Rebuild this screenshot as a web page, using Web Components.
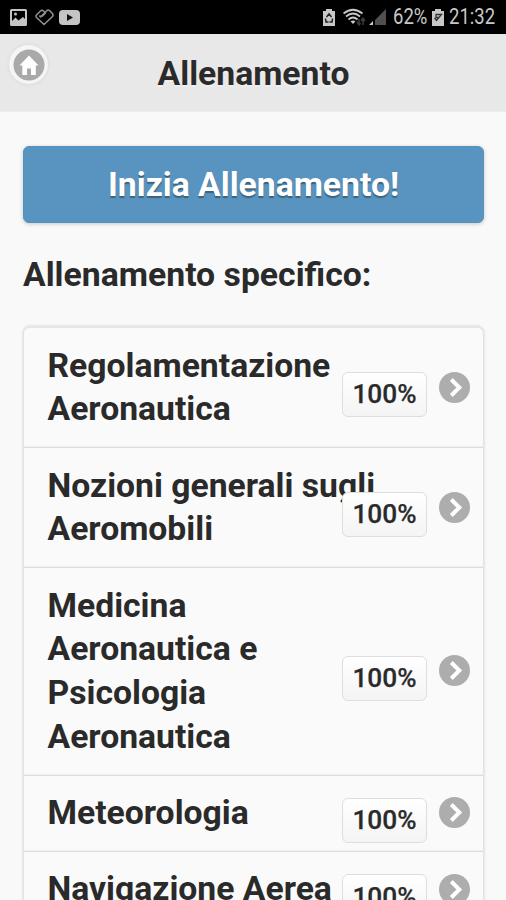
<!DOCTYPE html>
<html lang="it">
<head>
<meta charset="utf-8">
<title>Allenamento</title>
<style>
html, body { margin: 0; height: 900px; overflow: hidden; background: #f9f9f9; }
body { font-family: Roboto, "Liberation Sans", sans-serif; color: #2a2a2a; }
</style>
</head>
<body>
<training-app></training-app>
<script>
const define = (name, html) => customElements.define(name, class extends HTMLElement {
  constructor() {
    super();
    const t = document.createElement('template');
    t.innerHTML = html;
    this.attachShadow({ mode: 'open' }).append(t.content.cloneNode(true));
  }
});

define('status-bar', `
<style>
:host { display: flex; box-sizing: border-box; height: 34px; padding: 0 11px 0 10px; align-items: center; justify-content: space-between; background: #000; color: #c8c8c8; }
.side { display: flex; align-items: center; height: 34px; }
svg { display: block; flex: none; }
span { display: block; font-size: 21.5px; line-height: 34px; white-space: nowrap; }
.pct { width: 34px; margin-left: 6px; }
.pct b, .time b { display: block; font-weight: 400; transform-origin: 0 50%; transform: scaleX(.86); }
.time { width: 46px; margin-left: 5px; }
</style>
<div class="side">
  <svg width="17" height="17" viewBox="0 0 17 17"><path fill="#c4c4c4" fill-rule="evenodd" d="M1.500 0h14Q17 0 17 1.500v14Q17 17 15.500 17h-14Q0 17 0 15.500v-14Q0 0 1.500 0zM2 2v10l3.500-3.500 3 3L13 8l2 2V2z"/><circle cx="5.500" cy="5" r="1.500" fill="#c4c4c4"/></svg>
  <svg style="margin-left:8px" width="19" height="17" viewBox="0 0 19 17"><g fill="none" stroke="#929292" stroke-width="1.500" stroke-linejoin="round"><path d="M7 7.500 10.500 4 8.500 2Q7 .5 5.500 2L1.500 6Q.5 7 1.500 8.500L9 15.500l8.500-8Q18.500 6 17.500 4.500L14.500 1.500Q13 .5 11.500 2L5.500 8 4.500 6.500"/></g></svg>
  <svg style="margin-left:5px" width="21" height="15" viewBox="0 0 21 15"><rect width="21" height="15" rx="4" fill="#c4c4c4"/><path d="m8 4 6 3.500L8 11z" fill="#111"/></svg>
</div>
<div class="side">
  <svg width="12" height="17" viewBox="0 0 12 17"><path fill="#c8c8c8" d="M3 0h6v2h3v15H0V2h3z"/><path d="M3.500 8 6 5l2.500 3M2.500 9.500 3 13h2.500M9.500 9.500 9 13H6.500" fill="none" stroke="#222" stroke-width="1.500"/></svg>
  <svg style="margin-left:8px" width="23" height="19" viewBox="0 0 23 19"><g fill="none" stroke="#c8c8c8" stroke-width="1.700"><path d="M.5 5.500Q10 -2 19.500 5.500"/><path d="M3 8.500q7-6 14 0"/><path d="M5.500 11.500q4.500-4 9 0"/></g><path d="m7.500 13.300q2.500-1.500 5 0L10 16z" fill="#c8c8c8"/><path d="M16 17v-6m-2 3 2 3 1.500-2M20 17v-7m-2 3 2-3 2 3" stroke="#3c3c3c" stroke-width="1.500" fill="none"/></svg>
  <svg style="margin-left:3px" width="18" height="18" viewBox="0 0 18 18"><path d="M17 1v16H6v-5z" fill="#505050"/><path d="M4 13v4H0z" fill="#c8c8c8"/></svg>
  <span class="pct"><b>62%</b></span>
  <svg style="margin-left:5px" width="12" height="17" viewBox="0 0 12 17"><path fill="#c8c8c8" d="M3 0h6v2h3v15H0V2h3z"/><path d="m2.500 9 2 2.500L9.500 5.500H4v3h3" fill="none" stroke="#333" stroke-width="1.300"/></svg>
  <span class="time"><b>21:32</b></span>
</div>`);

define('home-button', `
<style>
:host { display: block; box-sizing: border-box; width: 39px; height: 39px; padding: 3.5px; border-radius: 50%; background: #f5f5f5; box-shadow: 0 0 3px 1px #dcdcdc; }
svg { display: block; }
</style>
<svg width="32" height="32" viewBox="0 0 32 32"><circle cx="16" cy="16" r="15.500" fill="#a9a9a9"/><path fill="#fff" d="M16 6.500 6.500 16.500h2.800V26H14v-6.500h4V26h4.800v-9.500h2.700z"/></svg>`);

define('page-header', `
<style>
:host { display: grid; box-sizing: border-box; height: 78px; padding: 2px 9px 0; grid-template-columns: 39px 1fr 39px; align-items: center; background: #e8e8e8; border-bottom: 1px solid #eee; }
home-button { align-self: start; margin-top: 9px; }
h1 { margin: 0 -1px 0 0; text-align: center; font-size: 33.700px; line-height: 44px; font-weight: 700; text-shadow: 0 2px 0 #eee; }
</style>
<home-button></home-button><h1><slot></slot></h1>`);

define('action-button', `
<style>
:host { display: flex; height: 77px; box-sizing: border-box; align-items: center; justify-content: center; border-radius: 6px; background: #5894bf; border: 1px solid #5593be; box-shadow: 0 1px 4px rgba(0,0,0,.2); color: #fff; font-size: 33.7px; font-weight: 700; text-shadow: 0 2px 1px #3e617b; white-space: nowrap; }
</style>
<slot></slot>`);

define('count-badge', `
<style>
:host { display: flex; box-sizing: border-box; width: 85px; height: 45px; align-items: center; justify-content: center; border: 1px solid #dedede; border-radius: 6px; background: linear-gradient(#fff, #f4f4f4); font-size: 26.25px; font-weight: 500; -webkit-text-stroke: .25px #2a2a2a; }
</style>
<slot></slot>`);

define('topic-row', `
<style>
:host { display: block; position: relative; box-sizing: border-box; padding: 15.500px 0 17.200px 23.500px; font-size: 33.700px; line-height: 43.680px; font-weight: 700; white-space: nowrap; box-shadow: inset 0 -1px #dedede, inset 0 -2px #efefef; }
count-badge { position: absolute; right: 56px; top: calc(50% - 16px); line-height: 1; }
svg { position: absolute; right: 13px; top: calc(50% - 16.500px); }
</style>
<slot></slot>
<count-badge><slot name="count"></slot></count-badge>
<svg width="31" height="31" viewBox="0 0 31 31"><circle cx="15.500" cy="15.500" r="15.500" fill="#adadad"/><path d="m12.300 7.500 8 8-8 8" fill="none" stroke="#fff" stroke-width="4"/></svg>`);

define('topic-list', `
<style>
:host { display: block; border: 1px solid #e2e2e2; border-top: 2px solid #e6e6e6; border-bottom: 0; border-radius: 7px 7px 0 0; background: #fafafa; box-shadow: 0 0 3px rgba(0,0,0,.16); }
</style>
<slot></slot>`);

define('training-app', `
<style>
:host { display: block; height: 900px; overflow: hidden; }
main { padding: 34px 22px 0 23px; }
h2 { margin: 30px 0 29px; font-size: 33.750px; line-height: 44px; font-weight: 700; white-space: nowrap; }
</style>
<status-bar></status-bar>
<page-header>Allenamento</page-header>
<main>
  <action-button>Inizia Allenamento!</action-button>
  <h2>Allenamento specifico:</h2>
  <topic-list>
    <topic-row>Regolamentazione<br>Aeronautica<span slot="count">100%</span></topic-row>
    <topic-row>Nozioni generali sugli<br>Aeromobili<span slot="count">100%</span></topic-row>
    <topic-row>Medicina<br>Aeronautica e<br>Psicologia<br>Aeronautica<span slot="count">100%</span></topic-row>
    <topic-row>Meteorologia<span slot="count">100%</span></topic-row>
    <topic-row>Navigazione Aerea<span slot="count">100%</span></topic-row>
  </topic-list>
</main>`);
</script>
</body>
</html>
